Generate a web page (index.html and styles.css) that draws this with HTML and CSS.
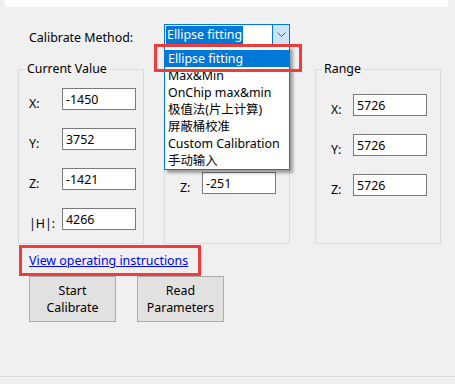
FILE: index.html
```html
<!DOCTYPE html>
<html lang="en">

<head>
    <meta charset="UTF-8">
    <meta name="viewport" content="width=device-width, initial-scale=1.0">
    <title>Calibrate</title>
    <link rel="stylesheet" href="styles.css">
</head>

<body>
    <div class="tab-strip"></div>

    <div class="page">
        <div class="method-row">
            <span class="method-label">Calibrate Method:</span>
            <div class="combo">
                <div class="combo-value"><span class="combo-selected">Ellipse fitting</span></div>
                <div class="combo-button">
                    <svg width="9" height="5" viewBox="0 0 9 5">
                        <polyline points="0.5,0.5 4.5,4.5 8.5,0.5" fill="none" stroke="#5a5a5a" stroke-width="1" />
                    </svg>
                </div>
                <ul class="combo-list">
                    <li class="active">Ellipse fitting</li>
                    <li>Max&amp;Min</li>
                    <li>OnChip max&amp;min</li>
                    <li>极值法(片上计算)</li>
                    <li>屏蔽桶校准</li>
                    <li>Custom Calibration</li>
                    <li>手动输入</li>
                </ul>
                <div class="mark mark-item"></div>
            </div>
        </div>

        <div class="groups">
            <fieldset class="group group-current">
                <legend>Current Value</legend>
                <div class="fields">
                    <label>X:</label><input type="text" value="-1450">
                    <label>Y:</label><input type="text" value="3752">
                    <label>Z:</label><input type="text" value="-1421">
                    <label>|H|:</label><input type="text" value="4266">
                </div>
            </fieldset>

            <fieldset class="group group-offset">
                <legend>Offset</legend>
                <div class="fields">
                    <label>X:</label><input type="text" value="-178">
                    <label>Y:</label><input type="text" value="1214">
                    <label>Z:</label><input type="text" value="-251">
                </div>
            </fieldset>

            <fieldset class="group group-range">
                <legend>Range</legend>
                <div class="fields">
                    <label>X:</label><input type="text" value="5726">
                    <label>Y:</label><input type="text" value="5726">
                    <label>Z:</label><input type="text" value="5726">
                </div>
            </fieldset>
        </div>

        <div class="link-row">
            <div class="mark-box">
                <a href="#">View operating instructions</a>
            </div>
        </div>

        <div class="buttons">
            <button>Start<br>Calibrate</button>
            <button>Read<br>Parameters</button>
        </div>
    </div>

    <div class="status-line"></div>
</body>

</html>
```

FILE: styles.css
```css
html,
body {
    height: 100%;
}

body {
    margin: 0;
    padding: 0;
    font-family: 'Noto Sans', 'Noto Sans CJK SC', sans-serif;
    font-size: 12.4px;
    color: #000;
    background-color: #f0f0f0;
    display: flex;
    flex-direction: column;
}

.tab-strip {
    height: 7px;
    margin: 0 7px 0 5px;
    background-color: #fff;
}

.page {
    flex: 1;
}

/* method selector */

.method-row {
    display: flex;
    align-items: center;
    margin-top: 16px;
    padding-left: 29px;
}

.method-label {
    width: 135px;
    line-height: 17px;
    padding-top: 6px;
}

.combo {
    position: relative;
    width: 126px;
    height: 22px;
    box-sizing: border-box;
    border: 1px solid #0078d7;
    background-color: #fff;
    display: flex;
}

.combo-value {
    flex: 1;
    padding: 1px;
}

.combo-selected {
    display: inline-block;
    height: 18px;
    line-height: 18px;
    padding: 0 1px;
    background-color: #0078d7;
    color: #fff;
}

.combo-button {
    width: 16px;
    border-left: 1px solid #0078d7;
    background-color: #cce4f7;
    display: flex;
    align-items: center;
    justify-content: center;
}

.combo-list {
    position: absolute;
    top: 21px;
    left: -1px;
    width: 126px;
    box-sizing: border-box;
    margin: 0;
    padding: 3px 0 0;
    list-style: none;
    background-color: #fff;
    border: 1px solid #0078d7;
    box-shadow: 3px 3px 3px rgba(0, 0, 0, 0.35);
    z-index: 2;
}

.combo-list li {
    height: 17px;
    line-height: 17px;
    padding-left: 3px;
    white-space: nowrap;
}

.combo-list li.active {
    background-color: #0078d7;
    color: #fff;
}

.mark {
    border: 3px solid #f03c3c;
}

.mark-item {
    position: absolute;
    left: -11px;
    top: 19px;
    width: 142px;
    height: 22px;
    z-index: 3;
}

/* group boxes */

.groups {
    display: flex;
    gap: 20px;
    margin-top: 15px;
    padding-left: 18px;
}

.group {
    width: 126px;
    height: 183px;
    box-sizing: border-box;
    margin: 0;
    padding: 0;
    min-width: 0;
    border: 1px solid #dcdcdc;
}

.group legend {
    margin-left: 6px;
    padding: 0 2px;
    line-height: 16px;
}

.group-range {
    margin-left: 5px;
}

.fields {
    display: grid;
    grid-template-columns: 22px 74px;
    row-gap: 18px;
    align-items: end;
    margin: 15px 0 0 15px;
}

.group-current .fields {
    grid-template-columns: 33px 74px;
    margin: 11px 0 0 10px;
}

.group-range .fields {
    margin-top: 17px;
}

.fields label {
    line-height: 17px;
    margin-bottom: -2px;
}

.fields input {
    width: 74px;
    height: 22px;
    box-sizing: border-box;
    border: 1px solid #7a7a7a;
    padding: 0 3px;
    font-family: inherit;
    font-size: 12.4px;
    color: #000;
    background-color: #fff;
}

/* link and buttons */

.link-row {
    margin-top: 1px;
    padding-left: 19px;
}

.mark-box {
    display: inline-block;
    border: 3px solid #f03c3c;
    padding: 4px 10px 4px 7px;
    line-height: 17px;
}

.mark-box a {
    color: #0000ff;
    text-decoration: underline;
}

.buttons {
    display: flex;
    gap: 21px;
    padding-left: 29px;
}

.buttons button {
    width: 87px;
    height: 46px;
    border: 1px solid #adadad;
    background-color: #e1e1e1;
    font-family: inherit;
    font-size: 12.4px;
    line-height: 17px;
    color: #000;
    padding: 0;
}

.status-line {
    height: 7px;
    border-top: 1px solid #dadada;
}
```
